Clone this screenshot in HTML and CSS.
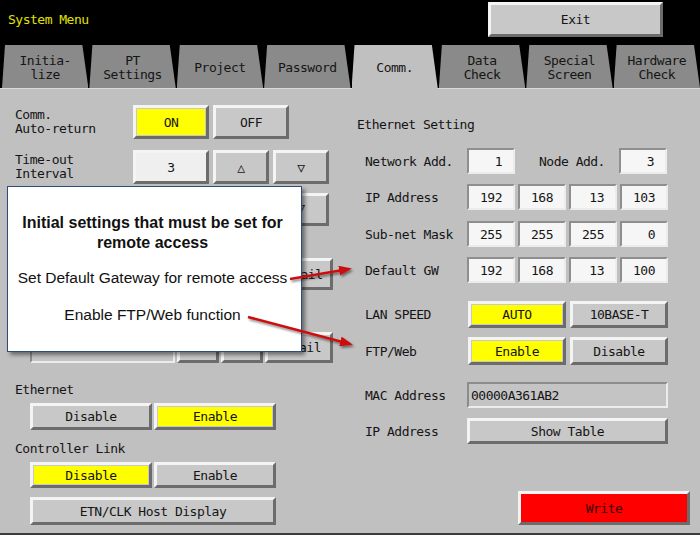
FILE: index.html
```html
<!DOCTYPE html>
<html lang="en">
<head>
    <meta charset="UTF-8">
    <meta name="viewport" content="width=device-width, initial-scale=1.0">
    <title>System Menu - Comm.</title>
    <link rel="stylesheet" href="styles.css">
</head>
<body>
<div class="screen">
    <div class="topbar">
        <span class="title">System Menu</span>
        <div class="btn exit">Exit</div>
    </div>

    <div class="tabs">
        <div class="tab">Initia-<br>lize</div>
        <div class="tab">PT<br>Settings</div>
        <div class="tab">Project</div>
        <div class="tab">Password</div>
        <div class="tab active">Comm.</div>
        <div class="tab">Data<br>Check</div>
        <div class="tab">Special<br>Screen</div>
        <div class="tab">Hardware<br>Check</div>
    </div>

    <div class="panel">
        <!-- left side -->
        <div class="left">
            <div class="row r1">
                <div class="label">Comm.<br>Auto-return</div>
                <div class="btn lit w76">ON</div>
                <div class="btn w76">OFF</div>
            </div>
            <div class="row r2">
                <div class="label">Time-out<br>Interval</div>
                <div class="btn pale w76">3</div>
                <div class="btn w56">&#9651;</div>
                <div class="btn w56">&#9661;</div>
            </div>
            <!-- rows below are mostly hidden by the callout -->
            <div class="row r3">
                <div class="label"></div>
                <div class="btn pale w76"></div>
                <div class="btn w56"></div>
                <div class="btn w56 peek">&#9661;</div>
            </div>
            <div class="row r4">
                <div class="btn detail4">Detail</div>
            </div>
            <div class="row r5">
                <div class="field f145"></div>
                <div class="btn w42"></div>
                <div class="btn w42"></div>
                <div class="btn w68">Detail</div>
            </div>

            <div class="sect s1">Ethernet</div>
            <div class="pair p1">
                <div class="btn w122">Disable</div>
                <div class="btn lit w122">Enable</div>
            </div>
            <div class="sect s2">Controller Link</div>
            <div class="pair p2">
                <div class="btn lit w122">Disable</div>
                <div class="btn w122">Enable</div>
            </div>
            <div class="btn host">ETN/CLK Host Display</div>
        </div>

        <!-- right side -->
        <div class="right">
            <div class="heading">Ethernet Setting</div>
            <div class="rrow net">
                <div class="rlabel">Network Add.</div>
                <div class="val">1</div>
                <div class="rlabel node">Node Add.</div>
                <div class="val">3</div>
            </div>
            <div class="rrow ip">
                <div class="rlabel">IP Address</div>
                <div class="val">192</div>
                <div class="val">168</div>
                <div class="val">13</div>
                <div class="val">103</div>
            </div>
            <div class="rrow mask">
                <div class="rlabel">Sub-net Mask</div>
                <div class="val">255</div>
                <div class="val">255</div>
                <div class="val">255</div>
                <div class="val">0</div>
            </div>
            <div class="rrow gw">
                <div class="rlabel">Default GW</div>
                <div class="val">192</div>
                <div class="val">168</div>
                <div class="val">13</div>
                <div class="val">100</div>
            </div>
            <div class="rrow lan">
                <div class="rlabel">LAN SPEED</div>
                <div class="btn lit w98">AUTO</div>
                <div class="btn w98">10BASE-T</div>
            </div>
            <div class="rrow ftp">
                <div class="rlabel">FTP/Web</div>
                <div class="btn lit w98">Enable</div>
                <div class="btn w98">Disable</div>
            </div>
            <div class="rrow mac">
                <div class="rlabel">MAC Address</div>
                <div class="field f201">00000A361AB2</div>
            </div>
            <div class="rrow show">
                <div class="rlabel">IP Address</div>
                <div class="btn w201">Show Table</div>
            </div>
            <div class="btn write">Write</div>
        </div>

        <!-- annotation -->
        <div class="callout">
            <p class="callout-title">Initial settings that must be set for<br>remote access</p>
            <p class="note gw-note">Set Default Gateway for remote access</p>
            <p class="note ftp-note">Enable FTP/Web function</p>
        </div>
        <svg class="arrows" width="700" height="444" viewBox="0 0 700 444">
            <defs>
                <marker id="head" markerWidth="13" markerHeight="10" refX="10" refY="5" orient="auto" markerUnits="userSpaceOnUse">
                    <path d="M0,0 L13,5 L0,10 Z" fill="#cc1111"/>
                </marker>
                <filter id="shadow" x="-10%" y="-50%" width="130%" height="200%">
                    <feDropShadow dx="1.5" dy="2" stdDeviation="1" flood-opacity="0.45"/>
                </filter>
            </defs>
            <g filter="url(#shadow)">
                <line x1="290" y1="190" x2="349" y2="180" stroke="#cc1111" stroke-width="2.5" marker-end="url(#head)"/>
                <line x1="248" y1="228" x2="350" y2="255" stroke="#cc1111" stroke-width="2.5" marker-end="url(#head)"/>
            </g>
        </svg>
    </div>
</div>
</body>
</html>
```

FILE: styles.css
```css
* {
    box-sizing: border-box;
}
body {
    margin: 0;
    background: #000;
    font-family: "DejaVu Sans Mono", monospace;
    font-size: 13px;
    letter-spacing: -0.5px;
    color: #151515;
}
.screen {
    width: 700px;
    height: 535px;
    overflow: hidden;
    background: #000;
}
/* Top bar */
.topbar {
    height: 45px;
    display: flex;
    justify-content: space-between;
    align-items: flex-start;
    padding: 2px 37px 0 8px;
}
.title {
    color: #e2e200;
    margin-top: 11px;
    line-height: 14px;
}
.exit {
    width: 175px;
    height: 35px;
    background: #d2d2d2;
}
/* Tabs */
.tabs {
    height: 43px;
    display: grid;
    grid-template-columns: repeat(8, 1fr);
    gap: 1px;
    padding-left: 2px;
}
.tab {
    background: #8a8a8a;
    clip-path: polygon(3px 0, calc(100% - 6px) 0, 100% 100%, 0 100%);
    display: flex;
    align-items: center;
    justify-content: center;
    text-align: center;
    line-height: 14px;
    padding-top: 2px;
}
.tab.active {
    background: #c0c0c0;
    margin-bottom: -1px;
    position: relative;
    z-index: 1;
}
/* Panel */
.panel {
    position: relative;
    height: 447px;
    background: #c0c0c0;
    border-top: 1px solid #dadada;
    border-bottom: 2px solid #3c3c3c;
    display: flex;
}
.btn {
    display: flex;
    align-items: center;
    justify-content: center;
    border: 3px solid;
    border-color: #f4f4f4 #6c6c6c #6c6c6c #f4f4f4;
    background: #c8c8c8;
    white-space: nowrap;
}
.btn.lit {
    background: #ffff00;
    box-shadow: inset 0 0 0 1px #c8c8c8;
}
.btn.pale {
    background: #efefef;
}
.btn.peek {
    align-items: flex-start;
    padding-top: 4px;
}
.field {
    height: 100%;
    display: flex;
    align-items: center;
    padding-left: 2px;
    border: 2px solid;
    border-color: #8c8c8c #ececec #ececec #8c8c8c;
    background: #c4c4c4;
}
.w42 { width: 42px; }
.w56 { width: 56px; }
.w68 { width: 68px; }
.w76 { width: 76px; }
.w98 { width: 98px; }
.w122 { width: 122px; }
.w201 { width: 201px; }
.f145 { width: 145px; }
.f201 { width: 201px; }
/* Left column */
.left {
    width: 357px;
    padding: 16px 0 0 15px;
    display: flex;
    flex-direction: column;
}
.row {
    display: flex;
    align-items: center;
    gap: 4px;
}
.row .btn {
    height: 100%;
}
.label {
    width: 114px;
    line-height: 14px;
}
.r1 { height: 34px; }
.r2 { height: 34px; margin-top: 11px; }
.r3 { height: 33px; margin-top: 9px; }
.r4 { height: 32px; margin-top: 32px; }
.r5 { height: 31px; margin-top: 42px; gap: 2px; padding-left: 15px; }
.detail4 {
    width: 65px;
    margin-left: 253px;
}
.sect {
    line-height: 14px;
}
.s1 { margin-top: 20px; }
.s2 { margin-top: 12px; }
.pair {
    display: flex;
    gap: 2px;
    margin: 6px 0 0 15px;
}
.p1 { height: 27px; }
.p2 { height: 26px; }
.host {
    width: 246px;
    height: 28px;
    margin: 9px 0 0 15px;
}
/* Right column */
.right {
    flex: 1;
    padding-top: 28px;
    display: flex;
    flex-direction: column;
}
.heading {
    line-height: 16px;
}
.rrow {
    display: flex;
    align-items: center;
    gap: 3px;
    height: 26px;
    padding-left: 8px;
    margin-top: 10px;
}
.rrow .btn {
    height: 100%;
}
.rlabel {
    width: 99px;
}
.rlabel.node {
    width: 77px;
    margin-left: 21px;
}
.val {
    width: 48px;
    height: 100%;
    display: flex;
    align-items: center;
    justify-content: flex-end;
    padding-right: 11px;
    border: 2px solid;
    border-color: #8e8e8e #ececec #ececec #8e8e8e;
    background: #f6f6f6;
}
.net { margin-top: 15px; }
.mask { margin-top: 11px; }
.lan { height: 27px; margin-top: 18px; gap: 4px; }
.ftp { height: 28px; margin-top: 9px; gap: 4px; }
.mac { margin-top: 17px; }
.write {
    width: 172px;
    height: 34px;
    margin: 47px 0 0 161px;
    background: #ff0000;
    color: #300;
}
/* Annotation callout */
.callout {
    position: absolute;
    left: 7px;
    top: 97px;
    width: 295px;
    height: 166px;
    background: #fff;
    border: 1px solid #2f4d7a;
    box-shadow: 3px 3px 4px rgba(0, 0, 0, 0.45);
    font-family: "Liberation Sans", Arial, sans-serif;
    letter-spacing: 0;
    color: #111;
    text-align: center;
    padding: 26px 4px 0 0;
    z-index: 2;
}
.callout p {
    margin: 0;
    line-height: 20px;
}
.callout-title {
    font-weight: bold;
    font-size: 16px;
}
.note {
    font-size: 15.5px;
}
.gw-note { margin-top: 15px !important; }
.ftp-note { margin-top: 17px !important; }
.arrows {
    position: absolute;
    left: 0;
    top: 0;
    pointer-events: none;
    z-index: 3;
}
```
